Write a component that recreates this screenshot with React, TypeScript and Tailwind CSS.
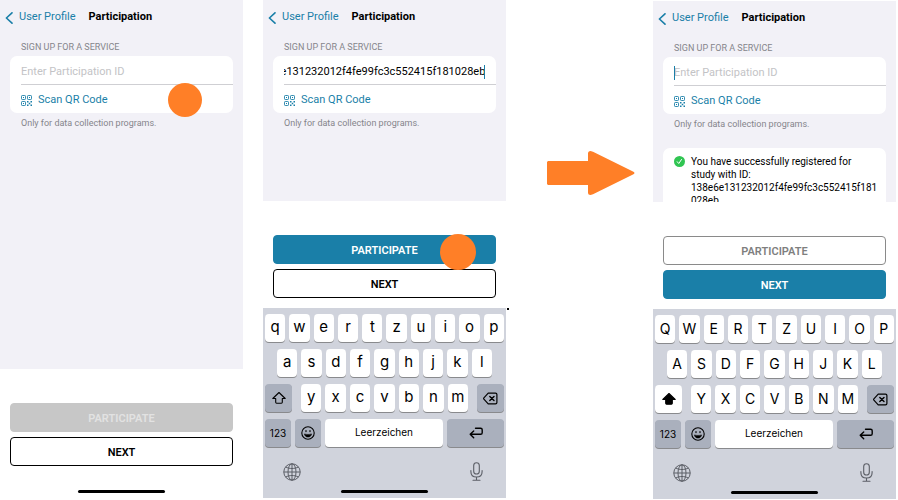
import React, { useEffect, useRef } from "react";

const PARTICIPATION_ID = "138e6e131232012f4fe99fc3c552415f181028eb";

function ChevronIcon() {
  return (
    <svg className="h-3 w-2" viewBox="0 0 8 12" fill="none" stroke="currentColor" strokeWidth="1.6" strokeLinecap="round" strokeLinejoin="round" aria-hidden="true">
      <path d="M7 .8 1.4 6 7 11.2" />
    </svg>
  );
}

function QrIcon() {
  return (
    <svg className="h-[11px] w-[11px]" viewBox="0 0 22 22" fill="none" stroke="currentColor" strokeWidth="1.8" aria-hidden="true">
      <rect x="1" y="1" width="8" height="8" rx="1.5" />
      <rect x="13" y="1" width="8" height="8" rx="1.5" />
      <rect x="1" y="13" width="8" height="8" rx="1.5" />
      <path d="M4 5h2M16 5h2M4 17h2" strokeWidth="2.2" />
      <path d="M12 13.5h3M19 13.5h3M15.5 17h3M12 20.5h3M19 20.5h3" strokeWidth="2.8" />
    </svg>
  );
}

function CheckIcon() {
  return (
    <svg className="mt-px h-[11px] w-[11px] shrink-0" viewBox="0 0 22 22" aria-hidden="true">
      <circle cx="11" cy="11" r="11" fill="#30c552" />
      <path d="m6.5 11.5 3 3.5 5.5-8" fill="none" stroke="#fff" strokeWidth="2" strokeLinecap="round" strokeLinejoin="round" />
    </svg>
  );
}

function ShiftIcon({ filled }: { filled: boolean }) {
  return (
    <svg className="h-[14px] w-[14px]" viewBox="0 0 14 14" fill={filled ? "currentColor" : "none"} stroke="currentColor" strokeWidth="1.1" strokeLinejoin="round" aria-hidden="true">
      <path d="M7 1.5.8 7.500h2.900v3.800c0 .6.3.9.9.9h4.800c.6 0 .9-.3.9-.9V7.500h2.900Z" />
    </svg>
  );
}

function BackspaceIcon() {
  return (
    <svg className="h-[13px] w-[15px]" viewBox="0 0 15 13" fill="none" stroke="currentColor" strokeWidth="1.2" strokeLinejoin="round" strokeLinecap="round" aria-hidden="true">
      <path d="M5.2 1.2h7.3c.9 0 1.4.5 1.4 1.4v7.8c0 .9-.5 1.4-1.4 1.4H5.2L.9 7.2c-.4-.5-.4-.9 0-1.4Z" />
      <path d="m6.8 4.4 4.2 4.2M11 4.4 6.8 8.6" strokeWidth="1.4" />
    </svg>
  );
}

function EmojiIcon() {
  return (
    <svg className="h-[14px] w-[14px]" viewBox="0 0 14 14" fill="none" stroke="currentColor" strokeWidth="1.1" aria-hidden="true">
      <circle cx="7" cy="7" r="6.200" />
      <path d="M5 4.600v1M9 4.600v1" strokeLinecap="round" strokeWidth="1.200" />
      <path d="M3.400 7.900c2.400.7 4.800.7 7.200 0-.3 2-1.700 3.200-3.600 3.200s-3.300-1.200-3.600-3.200Z" fill="currentColor" strokeWidth=".5" />
    </svg>
  );
}

function ReturnIcon() {
  return (
    <svg className="h-[12px] w-[14px]" viewBox="0 0 14 12" fill="none" stroke="currentColor" strokeWidth="1.4" strokeLinecap="round" strokeLinejoin="round" aria-hidden="true">
      <path d="M6.500 1.200h5.100c1 0 1.600.5 1.600 1.500v3c0 1-.6 1.600-1.600 1.600H1.200M4.700 3.900 1.200 7.300l3.500 3.500" />
    </svg>
  );
}

function GlobeIcon() {
  return (
    <svg className="h-[18px] w-[18px]" viewBox="0 0 18 18" fill="none" stroke="currentColor" strokeWidth="1" aria-hidden="true">
      <circle cx="9" cy="9" r="8.2" />
      <ellipse cx="9" cy="9" rx="4" ry="8.200" />
      <path d="M9 .8v16.400M.8 9h16.400M2.700 4c3.800 2 8.800 2 12.600 0M2.700 14c3.800-2 8.800-2 12.600 0" />
    </svg>
  );
}

function MicIcon() {
  return (
    <svg className="h-[19px] w-[13px]" viewBox="0 0 13 19" fill="none" stroke="currentColor" strokeWidth="1.1" strokeLinecap="round" aria-hidden="true">
      <rect x="3.700" y=".7" width="5.600" height="11.300" rx="2.800" />
      <path d="M.9 8.500v1.200c0 3.200 2.300 5.300 5.600 5.300s5.600-2.100 5.600-5.300V8.500M6.500 15v3M3 18.200h7" />
    </svg>
  );
}

function HomeBar() {
  return <div className="mx-auto h-[3px] w-[87px] rounded-full bg-black" />;
}

function TouchPoint({ className }: { className: string }) {
  return <span className={`absolute rounded-full bg-[#ff7f27] ${className}`} aria-hidden="true" />;
}

type FormProps = {
  id: string;
  value?: string;
  caret?: "start" | "end";
  children?: React.ReactNode;
};

function ParticipationForm({ id, value = "", caret, children }: FormProps) {
  const input = useRef<HTMLInputElement>(null);

  useEffect(() => {
    const el = input.current;
    if (el && caret === "end") el.scrollLeft = el.scrollWidth;
  }, [caret]);

  return (
    <main className="relative min-h-0 flex-1 overflow-hidden bg-[#f2f1f7]">
      <header className="flex h-[34px] items-center gap-[13px] pl-[5px] pt-px">
        <button type="button" className="flex items-center gap-1.5 text-[11px] text-[#1a7fa8]">
          <ChevronIcon />
          User Profile
        </button>
        <h1 className="text-[11px] font-bold text-black">Participation</h1>
      </header>
      <section className="px-2.5">
        <label htmlFor={id} className="flex h-[22px] items-center pl-[11px] pt-1.5 text-[9px] text-[#85858b]">
          SIGN UP FOR A SERVICE
        </label>
        <div className="rounded-[7px] bg-white pl-[11px]">
          <div className="relative mr-[11px] flex h-7 items-center pt-1">
            <input
              ref={input}
              id={id}
              type="text"
              defaultValue={value}
              placeholder="Enter Participation ID"
              className="w-full min-w-0 text-[11px] text-black outline-none placeholder:text-[#c3c3c6]"
            />
            {caret === "start" && <span className="absolute left-0 h-3.5 w-px bg-[#1a7fa8]" />}
            {caret === "end" && <span className="absolute right-0 h-3.5 w-px bg-[#1a7fa8]" />}
          </div>
          <button type="button" className="flex h-[29px] w-full items-center gap-1.5 border-t border-[#cfcfd3] pt-0.5 text-[11px] text-[#1a7fa8]">
            <QrIcon />
            Scan QR Code
          </button>
        </div>
        <p className="pl-[11px] pt-1 text-[9px] leading-3 text-[#85858b]">Only for data collection programs.</p>
        {children}
      </section>
    </main>
  );
}

const buttonStyles = {
  primary: "border-[#1a7fa8] bg-[#1a7fa8] text-white",
  outline: "border-black bg-white text-black",
  muted: "border-[#8a8a8a] bg-white text-[#7f7f7f]",
  disabled: "border-[#c7c7c7] bg-[#c7c7c7] text-[#e2e2e2]",
};

function ActionButton({ look, children }: { look: keyof typeof buttonStyles; children: string }) {
  return (
    <button type="button" disabled={look === "disabled"} className={`h-[29px] rounded-[4px] border pt-[3px] text-[11px] font-semibold ${buttonStyles[look]}`}>
      {children}
    </button>
  );
}

const keyBase = "flex h-7 items-center justify-center rounded-[4px] text-black shadow-[0_1px_0_#898a8d]";

function LetterKeys({ letters }: { letters: string }) {
  return (
    <>
      {letters.split("").map((letter) => (
        <button key={letter} type="button" className={`${keyBase} min-w-0 flex-1 bg-white pb-0.5 ${letter < "a" ? "text-[14px]" : "text-[15px]"}`}>
          {letter}
        </button>
      ))}
    </>
  );
}

function Keyboard({ upper = false }: { upper?: boolean }) {
  const rows = ["qwertzuiop", "asdfghjkl", "yxcvbnm"].map((row) => (upper ? row.toUpperCase() : row));
  return (
    <div className="flex flex-col gap-[7px] bg-[#d0d3dc] px-0.5 pb-[5px] pt-1.5 font-['Inter','Liberation_Sans',sans-serif]">
      <div className="flex gap-1">
        <LetterKeys letters={rows[0]} />
      </div>
      <div className="flex gap-1 px-3">
        <LetterKeys letters={rows[1]} />
      </div>
      <div className="flex gap-[9px]">
        <button type="button" aria-label="Shift" className={`${keyBase} w-[27px] ${upper ? "bg-white" : "bg-[#aab0bd]"}`}>
          <ShiftIcon filled={upper} />
        </button>
        <div className="flex flex-1 gap-1">
          <LetterKeys letters={rows[2]} />
        </div>
        <button type="button" aria-label="Delete" className={`${keyBase} w-[27px] bg-[#aab0bd]`}>
          <BackspaceIcon />
        </button>
      </div>
      <div className="flex gap-1">
        <button type="button" className={`${keyBase} w-[26px] bg-[#aab0bd] text-[10px]`}>123</button>
        <button type="button" aria-label="Emoji" className={`${keyBase} w-[26px] bg-[#aab0bd]`}>
          <EmojiIcon />
        </button>
        <button type="button" className={`${keyBase} flex-1 bg-white pb-0.5 text-[10px]`}>Leerzeichen</button>
        <button type="button" aria-label="Return" className={`${keyBase} w-[57px] bg-[#aab0bd]`}>
          <ReturnIcon />
        </button>
      </div>
      <div className="flex h-[29px] items-center justify-between pl-[18px] pr-[21px] pt-1.5 text-[#5b5e66]">
        <button type="button" aria-label="Switch keyboard">
          <GlobeIcon />
        </button>
        <button type="button" aria-label="Dictate">
          <MicIcon />
        </button>
      </div>
      <HomeBar />
    </div>
  );
}

export default function App() {
  return (
    <div className="grid h-screen grid-cols-[243fr_20fr_243fr_147fr_243fr_2fr] overflow-hidden bg-white pb-0.5 font-['Roboto','Liberation_Sans',sans-serif]">
      <div className="relative flex min-h-0 flex-col">
        <ParticipationForm id="participation-empty" />
        <div className="flex flex-col gap-[5px] px-2.5 pb-6 pt-[34px]">
          <ActionButton look="disabled">PARTICIPATE</ActionButton>
          <ActionButton look="outline">NEXT</ActionButton>
        </div>
        <div className="pb-[5px]">
          <HomeBar />
        </div>
        <TouchPoint className="left-[168px] top-[83px] h-[34px] w-[34px]" />
      </div>

      <div className="relative col-start-3 flex min-h-0 flex-col">
        <ParticipationForm id="participation-filled" value={PARTICIPATION_ID} caret="end" />
        <div className="relative flex flex-col gap-[5px] px-2.5 pb-2.5 pt-[34px]">
          <ActionButton look="primary">PARTICIPATE</ActionButton>
          <ActionButton look="outline">NEXT</ActionButton>
          <TouchPoint className="right-[30px] top-[33px] h-9 w-9" />
          <span className="absolute -bottom-0.5 -right-[3px] h-0.5 w-0.5 bg-black" />
        </div>
        <Keyboard />
      </div>

      <div className="flex items-start justify-end pr-[18px] pt-[151px]">
        <svg className="h-[44px] w-[88px]" viewBox="0 0 88 44" fill="#ff7f27" role="img" aria-label="Leads to">
          <path d="M1 10H41V2.500Q41 0 43.500 0L46 .7 86 20.500Q89 22 86 23.500L46 43.300 43.500 44Q41 44 41 41.500V34H1L0 33V11Z" />
        </svg>
      </div>

      <div className="-mb-px mt-px flex min-h-0 flex-col">
        <ParticipationForm id="participation-done" caret="start">
          <div role="status" className="mt-[18px] flex gap-1.5 rounded-[7px] bg-white pl-[11px] pr-[7px] pt-[7px] text-[10px] leading-[13px] text-black">
            <CheckIcon />
            <p className="min-w-0 flex-1 pb-2">
              You have successfully registered for <span className="block">study with ID:</span>{" "}
              <span className="block break-all">{PARTICIPATION_ID}</span>
            </p>
          </div>
        </ParticipationForm>
        <div className="flex flex-col gap-[5px] px-2.5 pb-2.5 pt-[34px]">
          <ActionButton look="muted">PARTICIPATE</ActionButton>
          <ActionButton look="primary">NEXT</ActionButton>
        </div>
        <Keyboard upper />
      </div>
    </div>
  );
}
